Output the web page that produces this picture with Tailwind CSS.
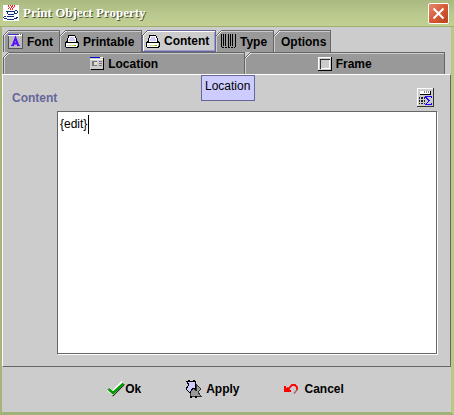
<!DOCTYPE html>
<html lang="en">
<head>
<meta charset="utf-8">
<title>Print Object Property</title>
<script src="https://cdn.jsdelivr.net/npm/@tailwindcss/browser@4"></script>
</head>
<body class="min-h-screen bg-[#ccc] font-['Liberation_Sans',Arial,sans-serif] text-xs text-black">
<svg class="hidden">
  <symbol id="corner" viewBox="0 0 6 6"><path fill="#ccc" d="M0 0h6v1H5v1H4v1H3v1H2v1H1v1H0z"/><path fill="#666" d="M5 0h1v1H5zM4 1h1v1H4zM3 2h1v1H3zM2 3h1v1H2zM1 4h1v1H1zM0 5h1v1H0z"/><path fill="#fff" d="M5 1h1v1H5zM4 2h1v1H4zM3 3h1v1H3zM2 4h1v1H2zM1 5h1v1H1z"/></symbol>
  <symbol id="printer" viewBox="0 0 14 13"><path fill="#000" d="M3 0h7v1h1v2h1v3h1v1h1v5h-1v1H1v-1H0V7h1V6h1V3h1z"/><path fill="#fff" d="M4 1h6v2h1v4H3V3h1zM1 8h11v4H1z"/><path fill="#ccf" d="M5 2h4v2h1v2H4V4h1z"/><path fill="#ccc" d="M2 10h5v1H2zM12 8h1v3h-1z"/><path fill="#dd0" d="M7 10h2v1H7z"/><path fill="#3c3" d="M9 10h2v1H9z"/></symbol>
</svg>
<div class="flex min-h-screen flex-col border-r-3 border-b-3 border-l-2 border-[#a5b575] border-r-[#b9c982] border-b-[#a1b177]">
  <header class="-mr-[3px] -ml-0.5 flex h-[27px] items-center border-b border-[#a0af70] bg-linear-to-b from-[#a9b980] via-[#b8c78c] to-[#c2d093] pr-[5px] pl-[3px]">
    <svg class="mr-1 size-4 bg-white" viewBox="0 0 16 16" shape-rendering="crispEdges"><path fill="#f22" d="M5 0h1v2H5zM7 0h1v1H7zM9 0h1v2H9zM11 0h1v2h-1zM6 2h1v1H6zM8 1h1v2H8zM10 2h1v1h-1zM5 3h1v1H5zM7 3h1v2H7zM9 3h1v2H9z"/><path fill="#137" d="M3 6h9v1H3zM12 5h2v1h-2zM14 6h1v2h-1zM12 8h2v1h-2zM4 7h1v2H4zM11 7h1v2h-1zM5 9h6v1H5zM4 11h7v1H4zM1 11h2v1H1zM0 12h1v1H0zM1 13h3v1H1zM4 14h7v1H4zM11 13h3v1h-3zM13 12h2v1h-2z"/></svg>
    <h1 class="flex-1 font-['Liberation_Serif','Times_New_Roman',serif] text-[13px] leading-4 font-bold text-white [text-shadow:1px_1px_0_#4d5230]">Print Object Property</h1>
    <button aria-label="Close" class="flex h-[21px] w-[21px] items-center justify-center rounded-xs border border-white bg-linear-to-br from-[#e08a70] via-[#d65a35] to-[#b8401c]"><svg class="size-[13px]" viewBox="0 0 13 13"><path d="m1.500 1.500 10 10m0-10-10 10" stroke="#fff" stroke-width="2"/></svg></button>
  </header>

  <nav class="pt-[3px] pr-1.5 pl-px font-bold" role="tablist">
    <div class="flex">
      <button role="tab" class="relative flex h-[22px] w-[57px] items-center gap-1 border-t border-r border-l border-[#666] bg-[#999] pl-1 shadow-[inset_1px_1px_0_#ccc]"><svg class="absolute -top-px -left-px size-1.5"><use href="#corner"/></svg><svg class="size-[15px]" viewBox="0 0 15 15" shape-rendering="crispEdges"><path fill="#bbb" stroke="#555" d="M.5.5h14v14H.5z"/><path fill="#33c" d="M0 0h10v1H0z"/><path fill="#fff" d="M0 1h14v1H0zM11 0h1v1h-1zM13 0h1v1h-1z"/><path shape-rendering="auto" fill="none" stroke="#51f" stroke-width="2" d="M4.500 12 7.500 4l3 8M5.500 9.500h4"/><path fill="#51f" d="M3 11h3v1H3zM9 11h3v1H9z"/></svg>Font</button>
      <button role="tab" class="relative flex h-[22px] w-[82px] items-center gap-1 border-t border-r border-[#666] bg-[#999] pl-[5px] shadow-[inset_1px_1px_0_#ccc]"><svg class="absolute -top-px left-0 size-1.5"><use href="#corner"/></svg><svg class="h-[13px] w-3.5"><use href="#printer"/></svg>Printable</button>
      <button role="tab" aria-selected="true" class="relative flex h-[22px] w-[74px] items-center gap-1 border border-[#669] bg-[#ccc] pl-[3px] shadow-[inset_1px_1px_0_#fff,inset_-1px_-1px_0_#99c]"><svg class="absolute -top-px -left-px size-1.5"><use href="#corner"/></svg><svg class="h-[13px] w-3.5"><use href="#printer"/></svg>Content</button>
      <button role="tab" class="relative flex h-[22px] w-[58px] items-center gap-1 border-t border-r border-[#666] bg-[#999] pl-[5px] shadow-[inset_1px_1px_0_#ccc]"><svg class="absolute -top-px left-0 size-1.5"><use href="#corner"/></svg><svg class="h-[15px] w-[15px]" viewBox="0 0 15 15" shape-rendering="crispEdges"><path fill="#000" d="M0 0h1v13H0zM2 0h1v12H2zM4 0h1v12H4zM7 0h1v13H7zM9 0h1v12H9zM11 0h1v12h-1zM14 0h1v13h-1z"/><path stroke="#000" stroke-dasharray="2 1" d="M1 13.500h13"/></svg>Type</button>
      <button role="tab" class="relative flex h-[22px] w-[57px] items-center border-t border-r border-[#666] bg-[#999] pl-[7px] shadow-[inset_1px_1px_0_#ccc]"><svg class="absolute -top-px left-0 size-1.5"><use href="#corner"/></svg>Options</button>
    </div>
    <div class="flex">
      <button role="tab" class="relative flex h-[22px] grow-[242] basis-0 items-center justify-center gap-1 border-t border-r border-l border-[#666] bg-[#999] shadow-[inset_1px_1px_0_#ccc]"><svg class="absolute -top-px -left-px size-1.5"><use href="#corner"/></svg><svg class="h-[13px] w-3.5" viewBox="0 0 14 13" shape-rendering="crispEdges"><path fill="#ccc" d="M0 1h13v11H0z"/><path fill="#00c" d="M0 0h10v1H0z"/><path fill="#fff" d="M10 0h3v1h-3zM0 2h13v1H0z"/><path fill="#777" d="M2 4h5v5H2zM9 4h3v1H9zM9 6h3v1H9zM9 8h3v1H9z"/><path fill="#ddd" d="M4 5h3v3H4z"/><path fill="#000" d="M13 1h1v12H1v-1h12z"/></svg>Location</button>
      <button role="tab" class="relative flex h-[22px] grow-[200] basis-0 items-center justify-center gap-1 border-t border-r border-[#666] bg-[#999] shadow-[inset_1px_1px_0_#ccc]"><svg class="absolute -top-px left-0 size-1.5"><use href="#corner"/></svg><svg class="size-3.5" viewBox="0 0 14 14" shape-rendering="crispEdges"><path fill="#fff" d="M0 0h14v14H0z"/><path fill="#000" d="M13 0h1v14H0v-1h13z"/><path fill="#ccc" d="M1 1h12v12H1z"/><path fill="#333" d="M2 2h10v1H3v9H2z"/><path fill="#fff" d="M11 3h1v9H3v-1h8z"/></svg>Frame</button>
    </div>
  </nav>

  <main class="relative flex flex-1 flex-col border border-[#666] border-t-white border-l-white pt-3 pr-[13px] pb-3 pl-[9px]">
    <div role="tooltip" class="absolute top-0 left-[198px] border border-[#669] bg-[#ccf] pt-0.5 pr-1 pb-1.5 pl-[3px] leading-4">Location</div>
    <div class="flex items-start justify-between pr-[3px]">
      <label for="content" class="pt-[3px] leading-4 font-bold text-[#669]">Content</label>
      <button aria-label="Insert expression" class="mt-px h-[19px] w-[17px]"><svg viewBox="0 0 17 19" class="h-[19px] w-[17px]" shape-rendering="crispEdges"><path fill="#333" d="M0 0h17v19H0z"/><path fill="#fff" d="M0 0h16v18H0z"/><path fill="#ccc" d="M1 1h15v17H1z"/><path fill="#fff" d="M3 3h10v3H3z"/><path fill="#000" d="M13 3h1v4H3V6h10z"/><path fill="#888" d="M7 3h1v2H7zM9 3h1v2H9zM11 3h1v2h-1z"/><path fill="#222" d="M2 9h1v2H2zM4 9h2v2H4zM7 9h1v2H7zM2 12h1v2H2zM4 12h2v2H4zM7 12h1v2H7zM2 15h1v1H2zM4 15h2v1H4zM7 15h1v1H7z"/><path fill="#20f" d="M8 8h7v2h-1V9h-4v1h1v1h1v1h1v1h-1v1h-1v1h-1v1h4v-1h1v2H8v-1h1v-1h1v-1h1v-2h-1v-1H9v-1H8z"/></svg></button>
    </div>
    <div class="relative mt-1 ml-[45px] flex flex-1 border border-[#666] shadow-[1px_1px_0_white]">
      <textarea id="content" class="block w-full flex-1 resize-none bg-white px-0.5 py-1 leading-4 outline-none">{edit}</textarea>
      <span class="absolute top-[3px] left-[30px] h-[19px] w-px bg-black"></span>
    </div>
  </main>

  <footer class="flex h-[45px] items-center justify-center pr-0.5 pb-0.5 font-bold">
    <button class="mr-11 flex items-center"><svg class="h-4 w-[18px]" viewBox="0 0 18 16"><path d="m1 8 5 6L17 3" fill="none" stroke="#000" stroke-width="2"/><path d="m1 8 4.500 4L16 1.500" fill="none" stroke="#fff" stroke-width="4"/><path d="m1.500 8 4.500 4L16.500 2.500" fill="none" stroke="#090" stroke-width="2.500"/></svg>Ok</button>
    <button class="mr-11 flex items-center gap-1"><svg class="h-[18px] w-[17px]" viewBox="0 0 17 18" shape-rendering="crispEdges"><path fill="#999" stroke="#333" d="M11.500 4.500 16 9l-3 3 3 4.500H5.500V8.500h3L11 11z"/><path fill="#ccf" stroke="#000" d="M1.500 1.500h9v8L8 8l-3 5-4-4 3-4z"/><path fill="#000" d="M3 0h2v2H3zM8 0h2v2H8zM5 16h2v2H5zM10 16h2v2h-2z"/></svg>Apply</button>
    <button class="flex items-center gap-1.5"><svg class="h-3.5 w-[15px]" viewBox="0 0 15 14"><path fill="#f00" d="M0 4h2v2l2-1 2 3h1v2H0z"/><path d="M4 7.500 8 3h3l2 2v3" fill="none" stroke="#f00" stroke-width="1.800"/><path d="m13 8-3 3.500" stroke="#a66" stroke-width="1.500"/></svg>Cancel</button>
  </footer>
</div>
</body>
</html>
